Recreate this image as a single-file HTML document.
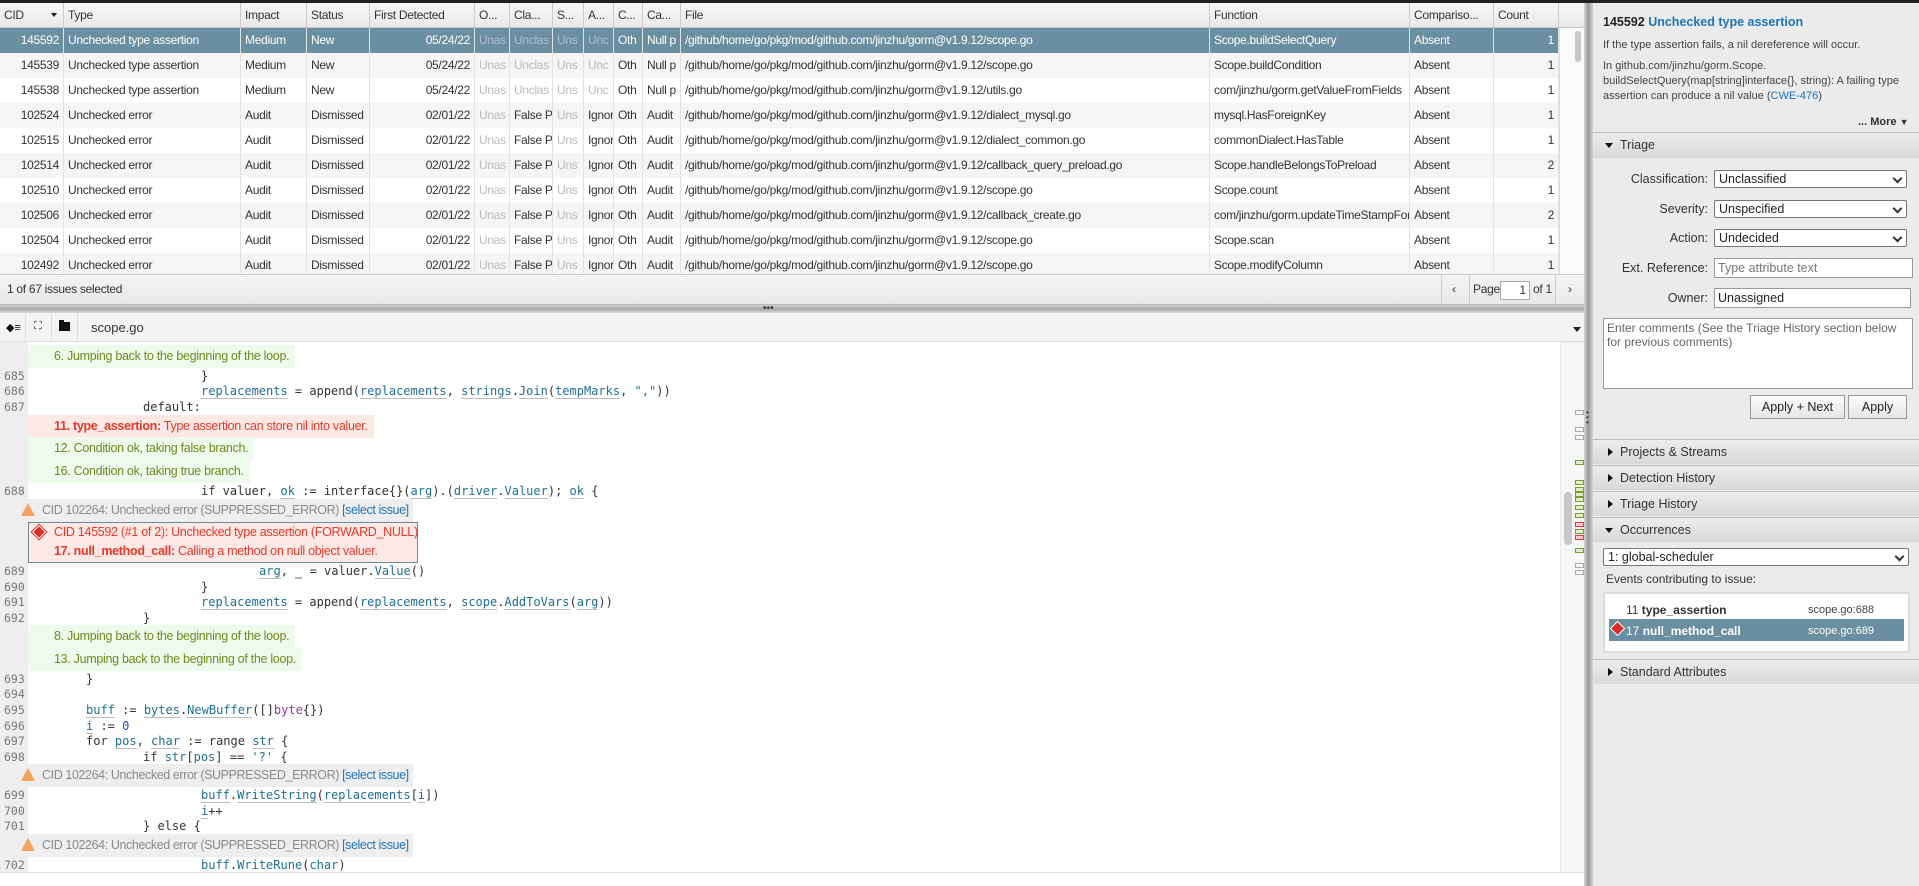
<!DOCTYPE html>
<html><head><meta charset="utf-8"><style>
*{box-sizing:border-box;margin:0;padding:0}
body{width:1919px;height:886px;overflow:hidden;background:#fff;font-family:"Liberation Sans",Arial,sans-serif;font-size:12px;color:#333;position:relative}
.a{position:absolute;white-space:nowrap}
.hdr{position:absolute;left:0;top:3px;width:1584px;height:25px;background:linear-gradient(#f7f7f7,#e9e9e9);border-bottom:1px solid #c8c8c8}
.row{position:absolute;left:0;width:1559px;height:25px;display:flex;align-items:center}
.c{overflow:hidden;white-space:nowrap;padding:0 4px;letter-spacing:-.3px;height:25px;line-height:25px;border-right:1px solid #e2e2e2}
.r{text-align:right}
.f{color:#bbb}
.sel{background:#6b8fa2;color:#fff}.sel .f{color:#a9bfcc}
.hc{height:25px;line-height:24px;border-right:1px solid #ccc}
.code{font-family:"DejaVu Sans Mono","Liberation Mono",monospace;font-size:12px;color:#333;position:absolute;white-space:pre;height:16px;line-height:16px}
.ln{position:absolute;left:4px;font-family:"DejaVu Sans Mono",monospace;font-size:11.5px;color:#777;height:16px;line-height:16px}
.v{color:#1f6f96;border-bottom:1px solid #bbb}
.ev{position:absolute;left:28px;height:23px;line-height:23px;padding-left:26px;padding-right:6px;font-size:12.5px;letter-spacing:-.3px;white-space:nowrap}
.g{background:#eefbec;color:#6b8c21}
.rd{background:#fce8e4;color:#e6392b}
.sup{position:absolute;left:17px;width:396px;height:23px;line-height:23px;background:#eeeeee;color:#8a8a8a;padding-left:25px;font-size:12.5px;letter-spacing:-.4px;white-space:nowrap;overflow:hidden}
.sup a{color:#1f74b8}
.warn{position:absolute;left:4px;top:4px;width:0;height:0;border-left:7px solid transparent;border-right:7px solid transparent;border-bottom:13px solid #f5a25f}
.sec{position:absolute;left:1593px;width:326px;height:25px;line-height:24px;background:linear-gradient(#ececec,#d9d9d9);border-top:1px solid #bcbcbc;padding-left:27px;font-size:12.5px;color:#333}
.tri{position:absolute;left:13px;top:8px;width:0;height:0}
.tr{border-top:4px solid transparent;border-bottom:4px solid transparent;border-left:5px solid #111;top:8px;left:15px}
.td{border-left:4px solid transparent;border-right:4px solid transparent;border-top:5px solid #111;top:10px;left:12px}
.lbl{position:absolute;text-align:right;width:110px;left:1598px;font-size:12.5px;color:#333}
.selb{position:absolute;left:1714px;width:193px;height:18px;border:1px solid #777;border-radius:2px;background:#fff;font-size:12.5px;padding-left:4px;line-height:16px;color:#222}
.selb:after{content:"";position:absolute;right:5px;top:4px;width:5px;height:5px;border-right:2px solid #333;border-bottom:2px solid #333;transform:rotate(45deg)}
.inp{position:absolute;left:1714px;height:20px;border:1px solid #999;background:#fff;font-size:12.5px;padding-left:3px;line-height:18px}
.btn{position:absolute;height:24px;border:1px solid #999;background:linear-gradient(#fbfbfb,#e6e6e6);text-align:center;line-height:22px;font-size:12.5px;color:#222}
</style></head><body>
<div class="a" style="left:0;top:0;width:1919px;height:3px;background:#222"></div>

<div class="hdr"><div class="row" style="top:0;height:25px">
<div class="c hc" style="width:64px;position:relative">CID<span style="position:absolute;right:6px;top:10px;border-left:3px solid transparent;border-right:3px solid transparent;border-top:4px solid #222"></span></div>
<div class="c hc" style="width:177px">Type</div><div class="c hc" style="width:66px">Impact</div><div class="c hc" style="width:63px">Status</div><div class="c hc" style="width:105px">First Detected</div><div class="c hc" style="width:35px">O...</div><div class="c hc" style="width:43px">Cla...</div><div class="c hc" style="width:31px">S...</div><div class="c hc" style="width:30px">A...</div><div class="c hc" style="width:29px">C...</div><div class="c hc" style="width:38px">Ca...</div><div class="c hc" style="width:529px">File</div><div class="c hc" style="width:200px">Function</div><div class="c hc" style="width:84px">Compariso...</div><div class="c hc" style="width:65px">Count</div></div></div>

<div id="rows"></div>
<div class="a" style="left:1559px;top:28px;width:25px;height:246px;background:#fafafa;border-left:1px solid #ddd"></div>
<div class="a" style="left:1575px;top:31px;width:6px;height:31px;background:#c8c8c8;border-radius:3px"></div>
<div class="a" style="left:1584px;top:3px;width:9px;height:883px;background:linear-gradient(90deg,#d6d6d6,#9a9a9a,#d6d6d6)"></div>

<div class="a" style="left:0;top:274px;width:1584px;height:31px;background:linear-gradient(#f4f4f4,#e8e8e8);border-top:1px solid #ccc;border-bottom:1px solid #bbb"></div>
<div class="a" style="left:7px;top:282px;font-size:12px;letter-spacing:-.3px">1 of 67 issues selected</div>
<div class="a" style="left:1441px;top:275px;width:1px;height:29px;background:#ccc"></div>
<div class="a" style="left:1452px;top:282px;font-size:12px">‹</div>
<div class="a" style="left:1469px;top:275px;width:1px;height:29px;background:#ccc"></div>
<div class="a" style="left:1473px;top:282px;letter-spacing:-.3px">Page</div>
<div class="a" style="left:1500px;top:281px;width:30px;height:19px;background:#fff;border:1px solid #aaa;text-align:right;padding-right:3px;line-height:17px">1</div>
<div class="a" style="left:1533px;top:282px;letter-spacing:-.3px">of 1</div>
<div class="a" style="left:1555px;top:275px;width:1px;height:29px;background:#ccc"></div>
<div class="a" style="left:1568px;top:282px">›</div>
<div class="a" style="left:0;top:305px;width:1584px;height:8px;background:linear-gradient(#d0d0d0,#a8a8a8,#d8d8d8)"></div>
<div class="a" style="left:763px;top:303px;font-size:10px;color:#333">•••</div>
<div class="a" style="left:0;top:313px;width:1584px;height:29px;background:#f4f4f4;border-bottom:1px solid #ddd"></div>
<div class="a" style="left:25px;top:314px;width:1px;height:27px;background:#ddd"></div>
<div class="a" style="left:51px;top:314px;width:1px;height:27px;background:#ddd"></div>
<div class="a" style="left:77px;top:314px;width:1px;height:27px;background:#ddd"></div>
<div class="a" style="left:6px;top:321px;font-size:11px;color:#111">◆≡</div>
<div class="a" style="left:34px;top:320px;font-size:11px;color:#222">⛶</div>
<div class="a" style="left:59px;top:322px;width:11px;height:9px;background:#111"></div>
<div class="a" style="left:59px;top:320px;width:5px;height:3px;background:#111"></div>
<div class="a" style="left:91px;top:320px;font-size:13px;color:#333">scope.go</div>
<div class="a" style="left:1573px;top:327px;border-left:4px solid transparent;border-right:4px solid transparent;border-top:5px solid #222"></div>

<div class="a" style="left:0;top:342px;width:28px;height:530px;background:#eeeeee"></div>
<div class="a" style="left:1560px;top:342px;width:24px;height:530px;background:#f6f6f6;border-left:1px solid #e8e8e8"></div>
<div class="a" style="left:1564px;top:492px;width:8px;height:53px;background:#c8c8c8;border-radius:4px"></div>
<div id="marks"></div>
<div class="a" style="left:1586px;top:410px;font-size:8px;line-height:5px;color:#333">•<br>•<br>•</div>

<div class="ev g" style="top:345px">6. Jumping back to the beginning of the loop.</div>
<div class="ln" style="top:368px">685</div><div class="code" style="left:201px;top:368px">}</div>
<div class="ln" style="top:383px">686</div><div class="code" style="left:201px;top:383px"><span class="v">replacements</span> = append(<span class="v">replacements</span>, <span class="v">strings</span>.<span class="v">Join</span>(<span class="v">tempMarks</span>, <span style="color:#1f6f96">","</span>))</div>
<div class="ln" style="top:399px">687</div><div class="code" style="left:143px;top:399px">default:</div>
<div class="ev rd" style="top:415px"><b>11. type_assertion:</b> Type assertion can store nil into valuer.</div>
<div class="ev g" style="top:437px">12. Condition ok, taking false branch.</div>
<div class="ev g" style="top:460px">16. Condition ok, taking true branch.</div>
<div class="ln" style="top:483px">688</div><div class="code" style="left:201px;top:483px">if valuer, <span class="v">ok</span> := interface{}(<span class="v">arg</span>).(<span class="v">driver</span>.<span class="v">Valuer</span>); <span class="v">ok</span> {</div>
<div class="sup" style="top:499px"><span class="warn"></span>CID 102264: Unchecked error (SUPPRESSED_ERROR) <a>[select issue]</a></div>
<div class="a" style="left:28px;top:522px;width:390px;height:41px;background:#fce8e4;border:1px solid #6a8a9a"></div>
<div class="a" style="left:34px;top:527px;width:10px;height:10px;background:#d9302a;transform:rotate(45deg);border:1px solid #fff;outline:1px solid #d9302a"></div>
<div class="a" style="left:54px;top:524px;font-size:12.5px;color:#e6392b;letter-spacing:-.3px;line-height:17px">CID 145592 (#1 of 2): Unchecked type assertion (FORWARD_NULL)</div>
<div class="a" style="left:54px;top:543px;font-size:12.5px;color:#e6392b;letter-spacing:-.3px;line-height:17px"><b>17. null_method_call:</b> Calling a method on null object valuer.</div>
<div class="ln" style="top:563px">689</div><div class="code" style="left:259px;top:563px"><span class="v">arg</span>, <span class="v">_</span> = valuer.<span class="v">Value</span>()</div>
<div class="ln" style="top:579px">690</div><div class="code" style="left:201px;top:579px">}</div>
<div class="ln" style="top:594px">691</div><div class="code" style="left:201px;top:594px"><span class="v">replacements</span> = append(<span class="v">replacements</span>, <span class="v">scope</span>.<span class="v">AddToVars</span>(<span class="v">arg</span>))</div>
<div class="ln" style="top:610px">692</div><div class="code" style="left:143px;top:610px">}</div>
<div class="ev g" style="top:625px">8. Jumping back to the beginning of the loop.</div>
<div class="ev g" style="top:648px">13. Jumping back to the beginning of the loop.</div>
<div class="ln" style="top:671px">693</div><div class="code" style="left:86px;top:671px">}</div>
<div class="ln" style="top:686px">694</div>
<div class="ln" style="top:702px">695</div><div class="code" style="left:86px;top:702px"><span class="v">buff</span> := <span class="v">bytes</span>.<span class="v">NewBuffer</span>([]<span style="color:#8a3aa8">byte</span>{})</div>
<div class="ln" style="top:718px">696</div><div class="code" style="left:86px;top:718px"><span class="v">i</span> := <span style="color:#2550c8">0</span></div>
<div class="ln" style="top:733px">697</div><div class="code" style="left:86px;top:733px">for <span class="v">pos</span>, <span class="v">char</span> := range <span class="v">str</span> {</div>
<div class="ln" style="top:749px">698</div><div class="code" style="left:143px;top:749px">if <span class="v">str</span>[<span class="v">pos</span>] == <span style="color:#1f6f96">'?'</span> {</div>
<div class="sup" style="top:764px"><span class="warn"></span>CID 102264: Unchecked error (SUPPRESSED_ERROR) <a>[select issue]</a></div>
<div class="ln" style="top:787px">699</div><div class="code" style="left:201px;top:787px"><span class="v">buff</span>.<span class="v">WriteString</span>(<span class="v">replacements</span>[<span class="v">i</span>])</div>
<div class="ln" style="top:803px">700</div><div class="code" style="left:201px;top:803px"><span class="v">i</span>++</div>
<div class="ln" style="top:818px">701</div><div class="code" style="left:143px;top:818px">} else {</div>
<div class="sup" style="top:834px"><span class="warn"></span>CID 102264: Unchecked error (SUPPRESSED_ERROR) <a>[select issue]</a></div>
<div class="ln" style="top:857px">702</div><div class="code" style="left:201px;top:857px"><span class="v">buff</span>.<span class="v">WriteRune</span>(<span class="v">char</span>)</div>
<div class="a" style="left:0;top:872px;width:1584px;height:14px;background:#fff;border-top:1px solid #ddd"></div>

<div class="a" style="left:1593px;top:3px;width:326px;height:883px;background:#ebebeb"></div>
<div class="a" style="left:1603px;top:15px;font-size:12.5px;font-weight:bold;color:#222">145592 <span style="color:#1a75bb">Unchecked type assertion</span></div>
<div class="a" style="left:1603px;top:39px;font-size:11px;color:#444">If the type assertion fails, a nil dereference will occur.</div>
<div class="a" style="left:1603px;top:59px;font-size:11px;color:#444;line-height:15px;white-space:normal;width:305px">In github.com/jinzhu/gorm.Scope.<br>buildSelectQuery(map[string]interface{}, string): A failing type assertion can produce a nil value (<span style="color:#1a75bb">CWE-476</span>)</div>
<div class="a" style="left:1858px;top:116px;font-size:11px;color:#333"><b>... More</b> <span style="font-size:9px">▼</span></div>
<div class="sec" style="top:132px;height:26px"><span class="tri td"></span>Triage</div>
<div class="lbl" style="top:172px">Classification:</div><div class="selb" style="top:170px">Unclassified</div>
<div class="lbl" style="top:202px">Severity:</div><div class="selb" style="top:200px">Unspecified</div>
<div class="lbl" style="top:231px">Action:</div><div class="selb" style="top:229px">Undecided</div>
<div class="lbl" style="top:261px">Ext. Reference:</div><div class="inp" style="top:258px;width:199px;color:#777">Type attribute text</div>
<div class="lbl" style="top:291px">Owner:</div><div class="inp" style="top:288px;width:197px;color:#222">Unassigned</div>
<div class="a" style="left:1603px;top:318px;width:310px;height:71px;background:#fff;border:1px solid #999;font-size:12px;color:#666;white-space:normal;padding:2px 3px;line-height:14px">Enter comments (See the Triage History section below for previous comments)</div>
<div class="btn" style="left:1750px;top:395px;width:95px">Apply + Next</div>
<div class="btn" style="left:1848px;top:395px;width:59px">Apply</div>
<div class="sec" style="top:439px"><span class="tri tr"></span>Projects &amp; Streams</div>
<div class="sec" style="top:465px"><span class="tri tr"></span>Detection History</div>
<div class="sec" style="top:491px"><span class="tri tr"></span>Triage History</div>
<div class="sec" style="top:517px"><span class="tri td"></span>Occurrences</div>
<div class="selb" style="left:1603px;top:548px;width:306px">1: global-scheduler</div>
<div class="a" style="left:1606px;top:572px;font-size:12px;color:#333">Events contributing to issue:</div>
<div class="a" style="left:1603px;top:592px;width:307px;height:61px;background:#fff;border:2px solid #ddd"></div>
<div class="a" style="left:1626px;top:603px;font-size:12px;color:#333">11 <b>type_assertion</b></div>
<div class="a" style="left:1808px;top:604px;font-size:11px;color:#444">scope.go:688</div>
<div class="a" style="left:1609px;top:619px;width:295px;height:22px;background:#6b8fa2"></div>
<div class="a" style="left:1613px;top:624px;width:9px;height:9px;background:#d9302a;transform:rotate(45deg);outline:1px solid #fff"></div>
<div class="a" style="left:1626px;top:624px;font-size:12px;color:#fff">17 <b>null_method_call</b></div>
<div class="a" style="left:1808px;top:625px;font-size:11px;color:#fff">scope.go:689</div>
<div class="sec" style="top:659px"><span class="tri tr"></span>Standard Attributes</div>

<script>
var R=[
["145592","Unchecked type assertion","Medium","New","05/24/22","Unas","Unclas","Uns","Unc","Oth","Null p","/github/home/go/pkg/mod/github.com/jinzhu/gorm@v1.9.12/scope.go","Scope.buildSelectQuery","1",1],
["145539","Unchecked type assertion","Medium","New","05/24/22","Unas","Unclas","Uns","Unc","Oth","Null p","/github/home/go/pkg/mod/github.com/jinzhu/gorm@v1.9.12/scope.go","Scope.buildCondition","1",1],
["145538","Unchecked type assertion","Medium","New","05/24/22","Unas","Unclas","Uns","Unc","Oth","Null p","/github/home/go/pkg/mod/github.com/jinzhu/gorm@v1.9.12/utils.go","com/jinzhu/gorm.getValueFromFields","1",1],
["102524","Unchecked error","Audit","Dismissed","02/01/22","Unas","False P","Uns","Ignore","Oth","Audit","/github/home/go/pkg/mod/github.com/jinzhu/gorm@v1.9.12/dialect_mysql.go","mysql.HasForeignKey","1",0],
["102515","Unchecked error","Audit","Dismissed","02/01/22","Unas","False P","Uns","Ignore","Oth","Audit","/github/home/go/pkg/mod/github.com/jinzhu/gorm@v1.9.12/dialect_common.go","commonDialect.HasTable","1",0],
["102514","Unchecked error","Audit","Dismissed","02/01/22","Unas","False P","Uns","Ignore","Oth","Audit","/github/home/go/pkg/mod/github.com/jinzhu/gorm@v1.9.12/callback_query_preload.go","Scope.handleBelongsToPreload","2",0],
["102510","Unchecked error","Audit","Dismissed","02/01/22","Unas","False P","Uns","Ignore","Oth","Audit","/github/home/go/pkg/mod/github.com/jinzhu/gorm@v1.9.12/scope.go","Scope.count","1",0],
["102506","Unchecked error","Audit","Dismissed","02/01/22","Unas","False P","Uns","Ignore","Oth","Audit","/github/home/go/pkg/mod/github.com/jinzhu/gorm@v1.9.12/callback_create.go","com/jinzhu/gorm.updateTimeStampForCreate","2",0],
["102504","Unchecked error","Audit","Dismissed","02/01/22","Unas","False P","Uns","Ignore","Oth","Audit","/github/home/go/pkg/mod/github.com/jinzhu/gorm@v1.9.12/scope.go","Scope.scan","1",0],
["102492","Unchecked error","Audit","Dismissed","02/01/22","Unas","False P","Uns","Ignore","Oth","Audit","/github/home/go/pkg/mod/github.com/jinzhu/gorm@v1.9.12/scope.go","Scope.modifyColumn","1",0]];
var W=[64,177,66,63,105,35,43,31,30,29,38,529,200,84,65];
var h="";
R.forEach(function(r,i){
 var vals=r.slice(0,13).concat(["Absent",r[13]]);var flag=r[14];
 var cls="row"+(i==0?" sel":"");var bg=i==0?"":(i%2?"background:#f5f5f5":"background:#fff");
 h+='<div class="'+cls+'" style="top:'+(28+i*25)+'px;'+bg+'">';
 for(var j=0;j<15;j++){var c="c";if(j==0||j==4||j==14)c+=" r";
  if(j==5||j==7)c+=" f";if(flag&&(j==6||j==8))c+=" f";
  h+='<div class="'+c+'" style="width:'+W[j]+'px">'+vals[j]+'</div>';}
 h+='</div>';});
document.getElementById("rows").innerHTML=h;
var M=[[410,'g'],[427,'g'],[435,'g'],[460,'gr'],[480,'gr'],[487,'gr'],[492,'gr'],[497,'gr'],[505,'gr'],[513,'gr'],[522,'r'],[529,'gr'],[535,'r'],[548,'gr'],[563,'g'],[570,'g']];
var m="";M.forEach(function(k){var b=k[1]=='r'?'border:1px solid #e33;background:#fcc':(k[1]=='gr'?'border:1px solid #7a9a2a;background:#dfeecb':'border:1px solid #aaa;background:#f6f6f6');
m+='<div class="a" style="left:1575px;top:'+k[0]+'px;width:9px;height:5px;'+b+'"></div>';});
document.getElementById("marks").innerHTML=m;
</script>
</body></html>
